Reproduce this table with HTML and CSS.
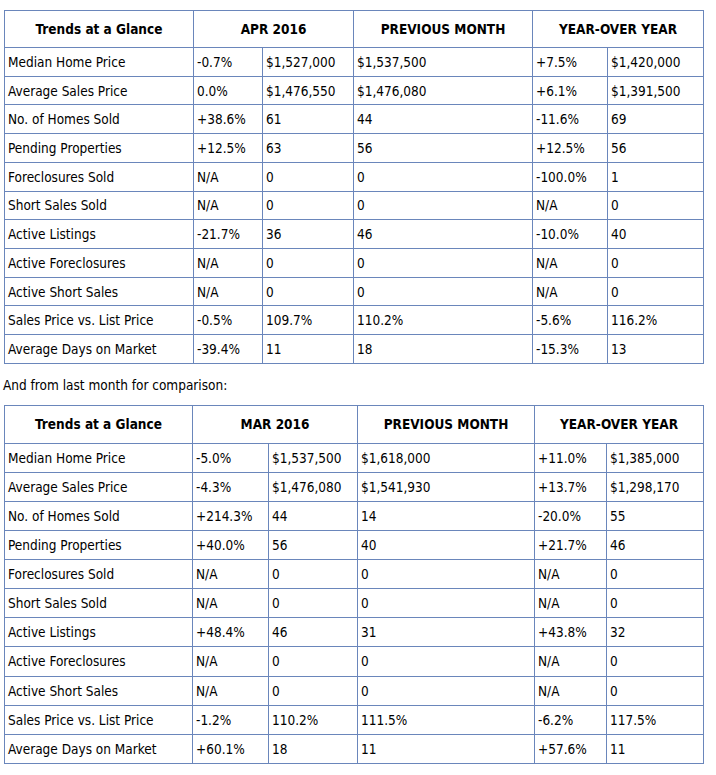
FILE: index.html
```html
<!DOCTYPE html>
<html>
<head>
<meta charset="utf-8">
<link rel="stylesheet" href="styles.css">
</head>
<body>
<table class="trends t1">
<colgroup><col class="c1"><col class="c2"><col class="c3"><col class="c4"><col class="c5"><col class="c6"></colgroup>
<tr class="head"><th>Trends at a Glance</th><th colspan="2">APR 2016</th><th>PREVIOUS MONTH</th><th colspan="2">YEAR-OVER YEAR</th></tr>
<tr><td>Median Home Price</td><td>-0.7%</td><td>$1,527,000</td><td>$1,537,500</td><td>+7.5%</td><td>$1,420,000</td></tr>
<tr><td>Average Sales Price</td><td>0.0%</td><td>$1,476,550</td><td>$1,476,080</td><td>+6.1%</td><td>$1,391,500</td></tr>
<tr><td>No. of Homes Sold</td><td>+38.6%</td><td>61</td><td>44</td><td>-11.6%</td><td>69</td></tr>
<tr><td>Pending Properties</td><td>+12.5%</td><td>63</td><td>56</td><td>+12.5%</td><td>56</td></tr>
<tr><td>Foreclosures Sold</td><td>N/A</td><td>0</td><td>0</td><td>-100.0%</td><td>1</td></tr>
<tr><td>Short Sales Sold</td><td>N/A</td><td>0</td><td>0</td><td>N/A</td><td>0</td></tr>
<tr><td>Active Listings</td><td>-21.7%</td><td>36</td><td>46</td><td>-10.0%</td><td>40</td></tr>
<tr><td>Active Foreclosures</td><td>N/A</td><td>0</td><td>0</td><td>N/A</td><td>0</td></tr>
<tr><td>Active Short Sales</td><td>N/A</td><td>0</td><td>0</td><td>N/A</td><td>0</td></tr>
<tr><td>Sales Price vs. List Price</td><td>-0.5%</td><td>109.7%</td><td>110.2%</td><td>-5.6%</td><td>116.2%</td></tr>
<tr><td>Average Days on Market</td><td>-39.4%</td><td>11</td><td>18</td><td>-15.3%</td><td>13</td></tr>
</table>
<p class="note">And from last month for comparison:</p>
<table class="trends t2">
<colgroup><col class="c1"><col class="c2"><col class="c3"><col class="c4"><col class="c5"><col class="c6"></colgroup>
<tr class="head"><th>Trends at a Glance</th><th colspan="2">MAR 2016</th><th>PREVIOUS MONTH</th><th colspan="2">YEAR-OVER YEAR</th></tr>
<tr><td>Median Home Price</td><td>-5.0%</td><td>$1,537,500</td><td>$1,618,000</td><td>+11.0%</td><td>$1,385,000</td></tr>
<tr><td>Average Sales Price</td><td>-4.3%</td><td>$1,476,080</td><td>$1,541,930</td><td>+13.7%</td><td>$1,298,170</td></tr>
<tr><td>No. of Homes Sold</td><td>+214.3%</td><td>44</td><td>14</td><td>-20.0%</td><td>55</td></tr>
<tr><td>Pending Properties</td><td>+40.0%</td><td>56</td><td>40</td><td>+21.7%</td><td>46</td></tr>
<tr><td>Foreclosures Sold</td><td>N/A</td><td>0</td><td>0</td><td>N/A</td><td>0</td></tr>
<tr><td>Short Sales Sold</td><td>N/A</td><td>0</td><td>0</td><td>N/A</td><td>0</td></tr>
<tr><td>Active Listings</td><td>+48.4%</td><td>46</td><td>31</td><td>+43.8%</td><td>32</td></tr>
<tr><td>Active Foreclosures</td><td>N/A</td><td>0</td><td>0</td><td>N/A</td><td>0</td></tr>
<tr><td>Active Short Sales</td><td>N/A</td><td>0</td><td>0</td><td>N/A</td><td>0</td></tr>
<tr><td>Sales Price vs. List Price</td><td>-1.2%</td><td>110.2%</td><td>111.5%</td><td>-6.2%</td><td>117.5%</td></tr>
<tr><td>Average Days on Market</td><td>+60.1%</td><td>18</td><td>11</td><td>+57.6%</td><td>11</td></tr>
</table>
</body>
</html>
```
FILE: styles.css
```css
html, body {
  margin: 0;
  background: #fff;
}
body {
  padding: 10px 0 0 4px;
  font-family: "DejaVu Sans Condensed", "DejaVu Sans", sans-serif;
  font-size: 13.5px;
  line-height: 16px;
  color: #000;
}
.trends {
  border-collapse: collapse;
  table-layout: fixed;
  width: 700px;
  border: 1px solid #6a86bb;
}
.trends th, .trends td {
  border: 1px solid #6a86bb;
  padding: 0 0 0 3px;
  text-align: left;
  vertical-align: middle;
  white-space: nowrap;
  font-weight: normal;
}
.trends th {
  text-align: center;
  font-weight: bold;
  padding: 0;
}
.t1 .head th { height: 36px; }
.t1 td { height: 27.73px; }
.t2 .head th { height: 37px; }
.t2 td { height: 28.09px; }
.t1 .c1 { width: 189px; }
.t1 .c2 { width: 69px; }
.t1 .c3 { width: 91px; }
.t1 .c4 { width: 179px; }
.t1 .c5 { width: 75px; }
.t1 .c6 { width: 96px; }
.t2 .c1 { width: 188px; }
.t2 .c2 { width: 76px; }
.t2 .c3 { width: 89px; }
.t2 .c4 { width: 177px; }
.t2 .c5 { width: 72px; }
.t2 .c6 { width: 97px; }
.note {
  margin: 13px 0 12px -1px;
}
```
